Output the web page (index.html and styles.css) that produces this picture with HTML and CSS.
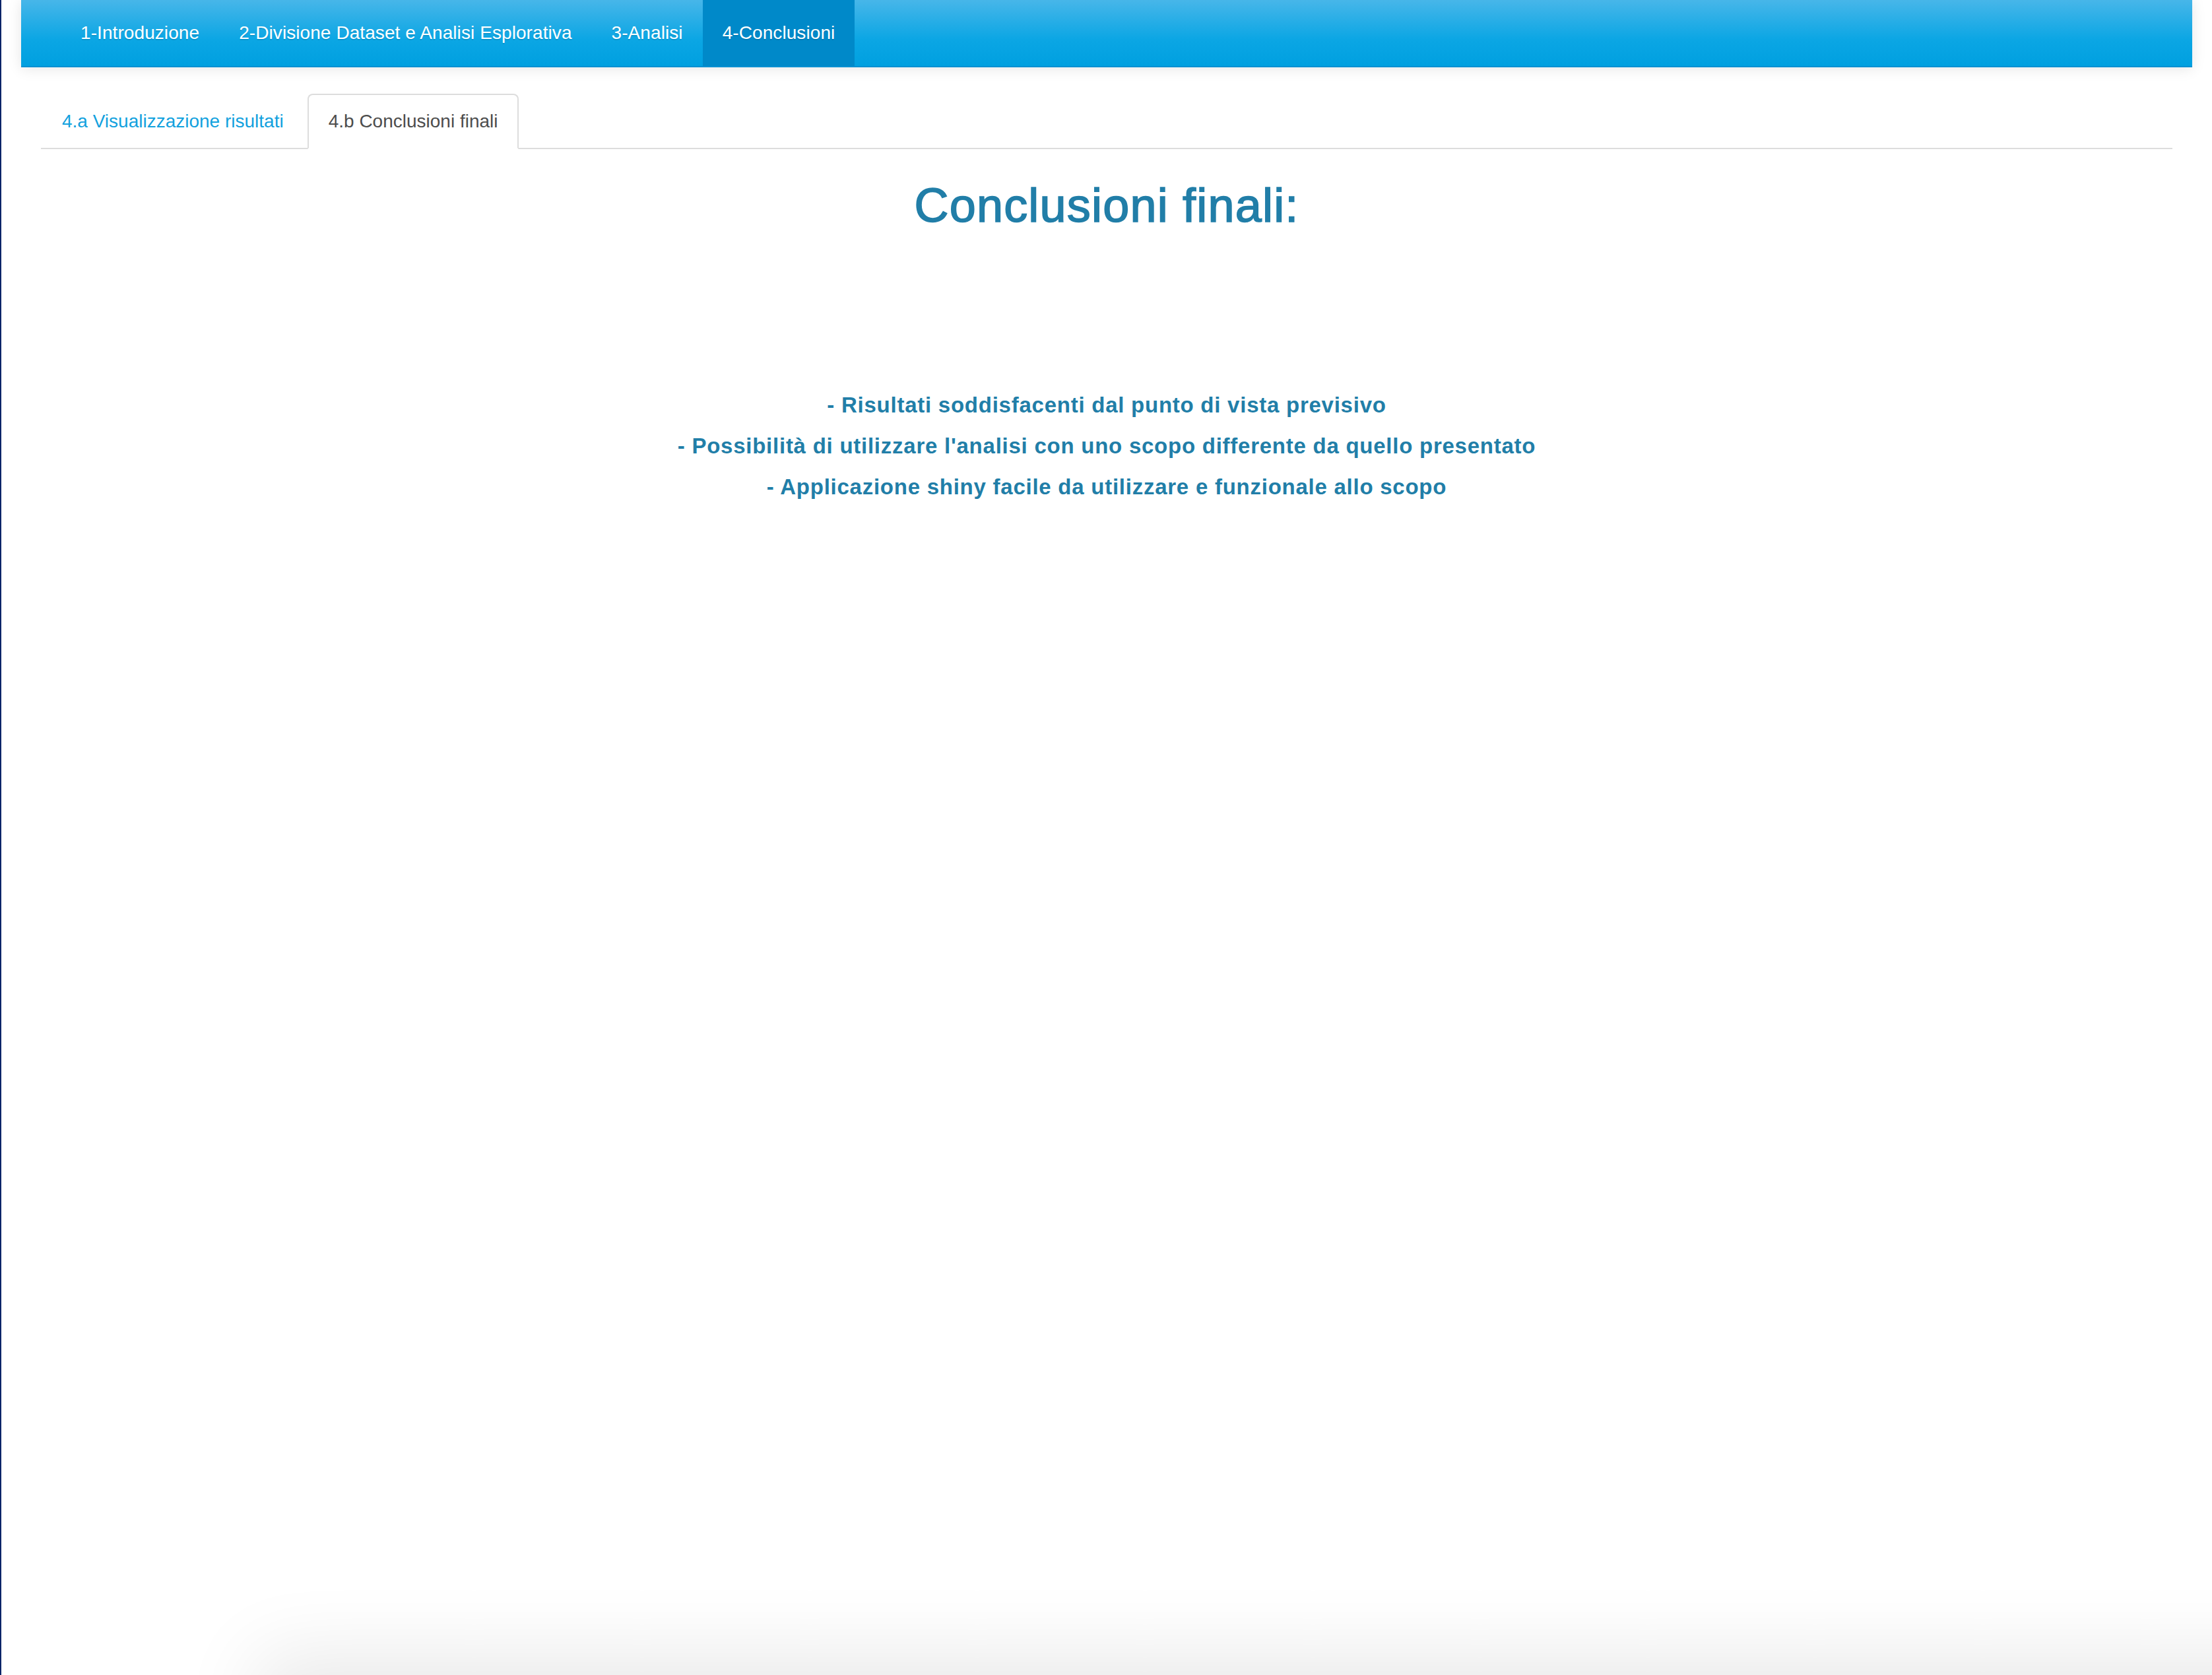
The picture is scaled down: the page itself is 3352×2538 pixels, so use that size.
FILE: index.html
```html
<!DOCTYPE html>
<html lang="it">
<head>
<meta charset="utf-8">
<title>Conclusioni</title>
<link rel="stylesheet" href="styles.css">
</head>
<body>
<div class="app">
  <nav class="navbar">
    <span class="brand"></span>
    <ul class="nav-main">
      <li><a>1-Introduzione</a></li>
      <li><a>2-Divisione Dataset e Analisi Esplorativa</a></li>
      <li><a>3-Analisi</a></li>
      <li class="active"><a>4-Conclusioni</a></li>
    </ul>
  </nav>
  <div class="container">
    <ul class="tabs">
      <li><a>4.a Visualizzazione risultati</a></li>
      <li class="active"><a>4.b Conclusioni finali</a></li>
    </ul>
    <div class="tab-content">
      <h1 class="title">Conclusioni finali:</h1>
      <div class="points">
        <p>- Risultati soddisfacenti dal punto di vista previsivo</p>
        <p>- Possibilità di utilizzare l'analisi con uno scopo differente da quello presentato</p>
        <p>- Applicazione shiny facile da utilizzare e funzionale allo scopo</p>
      </div>
    </div>
  </div>
</div>
<div class="bottom-shadow"></div>
</body>
</html>
```
FILE: styles.css
```css
html, body {
  margin: 0;
  padding: 0;
  background: #fff;
}
body {
  min-height: 2538px;
  box-sizing: border-box;
  border-left: 2px solid #0b2468;
  font-family: "Liberation Sans", Arial, sans-serif;
  overflow: hidden;
}
.app {
  padding: 0 30px;
}
.navbar {
  display: flex;
  height: 100px;
  border-bottom: 2px solid #0090d2;
  background: linear-gradient(#47b6e9, #0ba6e4 60%, #00a0e0);
  box-shadow: 0 2px 20px rgba(0, 0, 0, 0.1);
  margin-bottom: 40px;
}
.brand {
  width: 60px;
}
.nav-main {
  display: flex;
  list-style: none;
  margin: 0;
  padding: 0;
}
.nav-main a {
  display: block;
  padding: 30px;
  line-height: 40px;
  font-size: 28px;
  letter-spacing: 0.08px;
  color: #fff;
  text-shadow: 0 2px 0 rgba(0, 0, 0, 0.1);
}
.nav-main .active a {
  background: #0089c9;
}
.container {
  padding: 0 30px;
}
.tabs {
  display: flex;
  list-style: none;
  margin: 0;
  padding: 0;
  border-bottom: 2px solid #ddd;
}
.tabs li {
  margin-bottom: -2px;
  margin-right: 4px;
}
.tabs a {
  display: block;
  padding: 20px 30px;
  line-height: 40px;
  font-size: 28px;
  color: #12a1de;
  border: 2px solid transparent;
  border-radius: 8px 8px 0 0;
}
.tabs .active a {
  color: #4d4d4d;
  background: #fff;
  border-color: #ddd #ddd transparent;
}
.title {
  margin: 46px 0 0;
  text-align: center;
  font-size: 72px;
  font-weight: normal;
  line-height: 79px;
  letter-spacing: 1.2px;
  color: #217ea8;
  -webkit-text-stroke: 1.6px #217ea8;
}
.points {
  margin-top: 232px;
  text-align: center;
  font-size: 33px;
  font-weight: bold;
  line-height: 62px;
  letter-spacing: 0.75px;
  color: #217ea8;
}
.points p {
  margin: 0;
}
.bottom-shadow {
  position: fixed;
  left: 420px;
  right: -200px;
  top: 100%;
  height: 200px;
  box-shadow: 0 0 120px 30px rgba(0, 0, 0, 0.09);
}
```
